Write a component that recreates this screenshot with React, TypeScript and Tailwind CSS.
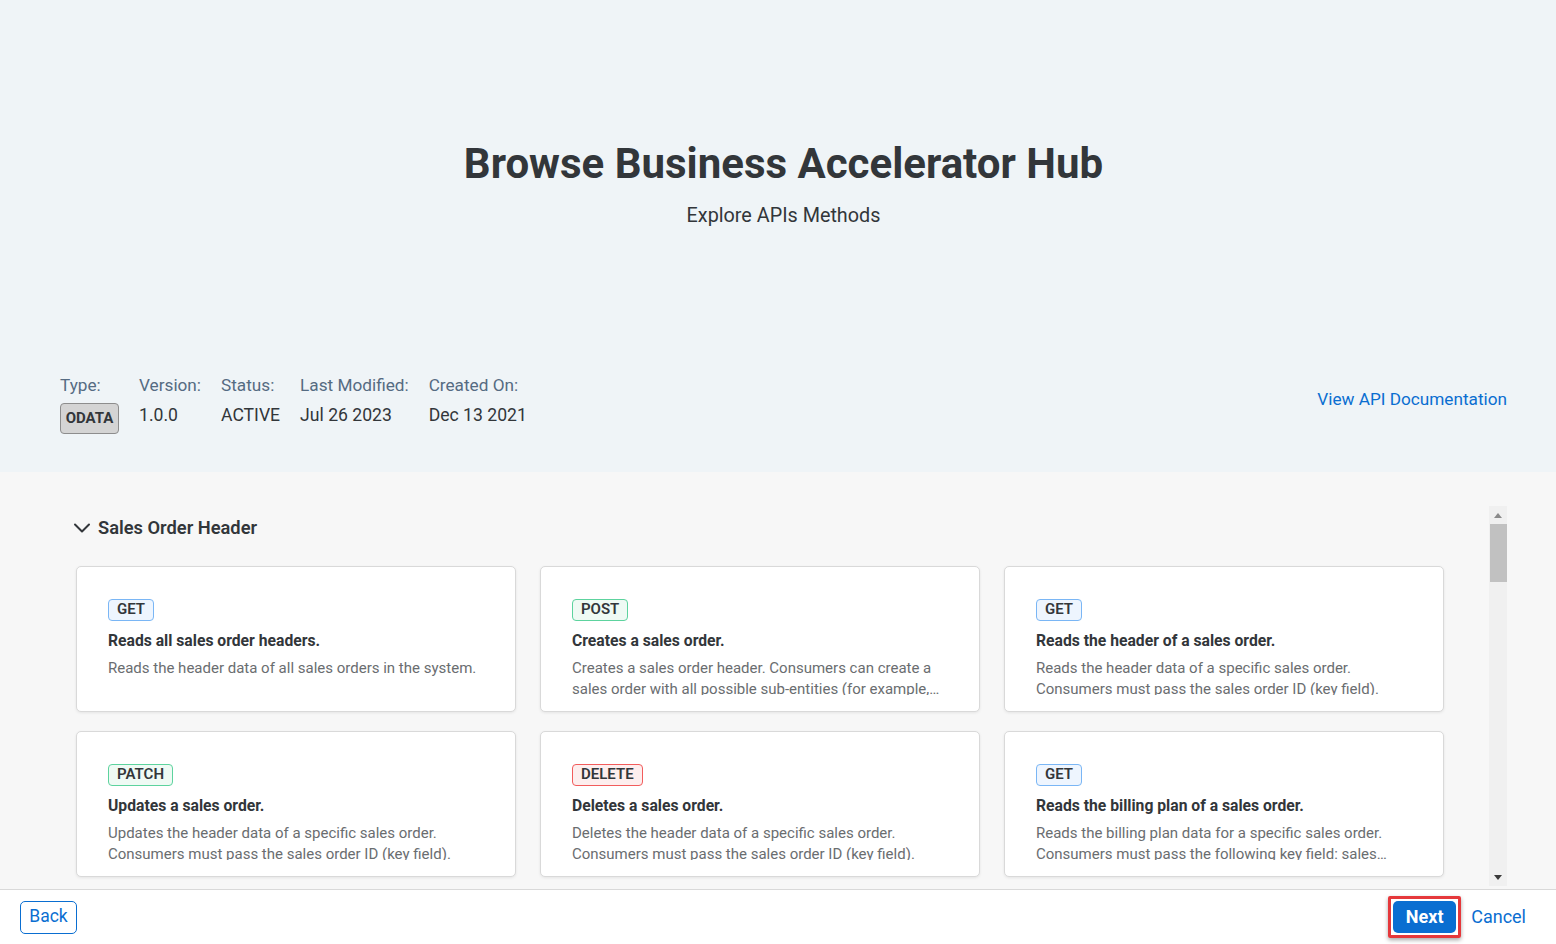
import React from 'react';

type Method = 'GET' | 'POST' | 'PATCH' | 'DELETE';

interface Operation {
  method: Method;
  title: string;
  description: string;
}

const operations: Operation[] = [
  {
    method: 'GET',
    title: 'Reads all sales order headers.',
    description: 'Reads the header data of all sales orders in the system.',
  },
  {
    method: 'POST',
    title: 'Creates a sales order.',
    description:
      'Creates a sales order header. Consumers can create a sales order with all possible sub-entities (for example, items, partners, pricing elements) in one request.',
  },
  {
    method: 'GET',
    title: 'Reads the header of a sales order.',
    description: 'Reads the header data of a specific sales order. Consumers must pass the sales order ID (key field).',
  },
  {
    method: 'PATCH',
    title: 'Updates a sales order.',
    description: 'Updates the header data of a specific sales order. Consumers must pass the sales order ID (key field).',
  },
  {
    method: 'DELETE',
    title: 'Deletes a sales order.',
    description: 'Deletes the header data of a specific sales order. Consumers must pass the sales order ID (key field).',
  },
  {
    method: 'GET',
    title: 'Reads the billing plan of a sales order.',
    description:
      'Reads the billing plan data for a specific sales order. Consumers must pass the following key field: sales order ID.',
  },
];

const methodStyle = (method: Method) => {
  switch (method) {
    case 'POST':
    case 'PATCH':
      return 'border-[#5dd39e] bg-[#effaf4]';
    case 'DELETE':
      return 'border-[#f25c5c] bg-[#fdeeee]';
    default:
      return 'border-[#7ab6f5] bg-[#eef5fe]';
  }
};

const meta = [
  { label: 'Version:', value: '1.0.0' },
  { label: 'Status:', value: 'ACTIVE' },
  { label: 'Last Modified:', value: 'Jul 26 2023' },
  { label: 'Created On:', value: 'Dec 13 2021' },
];

const OperationCard: React.FC<{ op: Operation }> = ({ op }) => (
  <div className="h-[146px] overflow-hidden rounded-[5px] border border-[#d9d9d9] bg-white px-[31px] pt-[30px] shadow-[0_1px_3px_rgba(0,0,0,0.08)]">
    <span
      className={`inline-flex h-[22px] items-center rounded-[4px] border px-[8px] text-[15px] font-semibold leading-none text-[#32363a] ${methodStyle(op.method)}`}
    >
      {op.method}
    </span>
    <div className="mt-[10px] text-[15.7px] font-bold leading-[20px] text-[#32363a]">{op.title}</div>
    <div className="mt-[7px] line-clamp-2 max-h-[37px] overflow-hidden text-[15px] leading-[21px] text-[#6a6d70]">
      {op.description}
    </div>
  </div>
);

export default function App() {
  return (
    <div
      className="flex h-[944px] w-[1556px] flex-col overflow-hidden bg-[#f7f7f7]"
      style={{ fontFamily: 'Roboto, "Noto Sans", "Liberation Sans", sans-serif' }}
    >
      {/* header */}
      <div className="flex h-[472px] shrink-0 flex-col bg-[#eff4f7] pl-[60px] pr-[49px]">
        <div className="flex flex-col items-center pt-[139px]">
          <h1 className="text-[42px] font-bold leading-[50px] text-[#32363a]">Browse Business Accelerator Hub</h1>
          <p className="mt-[15px] text-[19.8px] leading-[24px] text-[#32363a]">Explore APIs Methods</p>
        </div>
        <div className="mt-auto flex items-start justify-between pb-[38px]">
          <div className="flex gap-[20px]">
            <div className="flex flex-col">
              <span className="text-[17.2px] leading-[24px] text-[#556b82]">Type:</span>
              <span className="mt-[6px] inline-flex h-[31px] w-[59px] items-center justify-center rounded-[4px] border border-[#8d8d8d] bg-[#d4d4d4] text-[15px] font-bold text-[#32363a]">
                ODATA
              </span>
            </div>
            {meta.map(m => (
              <div key={m.label} className="flex flex-col">
                <span className="text-[17.2px] leading-[24px] text-[#556b82]">{m.label}</span>
                <span className="mt-[6px] text-[17.6px] leading-[24px] text-[#32363a]">{m.value}</span>
              </div>
            ))}
          </div>
          <a className="mt-[14px] text-[17.2px] leading-[24px] text-[#0a6ed1]">View API Documentation</a>
        </div>
      </div>

      {/* content */}
      <div className="flex min-h-0 flex-1 pl-[60px] pr-[49px] pt-[34px]">
        <div className="flex-1">
          <div className="mt-[10px] flex items-center gap-[7px] pl-[13px]">
            <svg width="18" height="18" viewBox="0 0 18 18" fill="none">
              <path d="M2 5.5 L9 12.5 L16 5.5" stroke="#32363a" strokeWidth="2" strokeLinecap="round" strokeLinejoin="round" />
            </svg>
            <span className="text-[18.3px] font-semibold leading-[24px] text-[#32363a]">Sales Order Header</span>
          </div>
          <div className="ml-[16px] mt-[26px] grid w-[1368px] grid-cols-3 gap-x-[24px] gap-y-[19px]">
            {operations.map((op, i) => (
              <OperationCard key={i} op={op} />
            ))}
          </div>
        </div>
        <div className="flex h-[380px] w-[18px] flex-col items-center bg-[#f0f0f0]">
          <svg width="10" height="18" viewBox="0 0 10 18">
            <path d="M1 12 L5 7 L9 12 Z" fill="#8a8a8a" />
          </svg>
          <div className="h-[58px] w-[17px] bg-[#c1c1c1]" />
          <div className="flex-1" />
          <svg width="10" height="16" viewBox="0 0 10 16">
            <path d="M1 5 L5 10 L9 5 Z" fill="#3a3a3a" />
          </svg>
        </div>
      </div>

      {/* footer */}
      <div className="flex h-[55px] shrink-0 items-center justify-between border-t border-[#d9d9d9] bg-white pl-[20px] pr-[30px]">
        <button className="h-[33px] w-[57px] rounded-[5px] border border-[#0a6ed1] text-[17.5px] leading-none text-[#0a6ed1]">
          Back
        </button>
        <div className="flex items-center gap-[10px]">
          <div className="rounded-[2px] border-[3px] border-[#e5383b] p-[2px] shadow-[0_2px_4px_rgba(0,0,0,0.35)]">
            <button className="h-[32px] w-[63px] rounded-[5px] bg-[#0a6ed1] text-[18px] font-bold leading-none text-white">
              Next
            </button>
          </div>
          <button className="text-[18px] leading-none text-[#0a6ed1]">Cancel</button>
        </div>
      </div>
    </div>
  );
}
